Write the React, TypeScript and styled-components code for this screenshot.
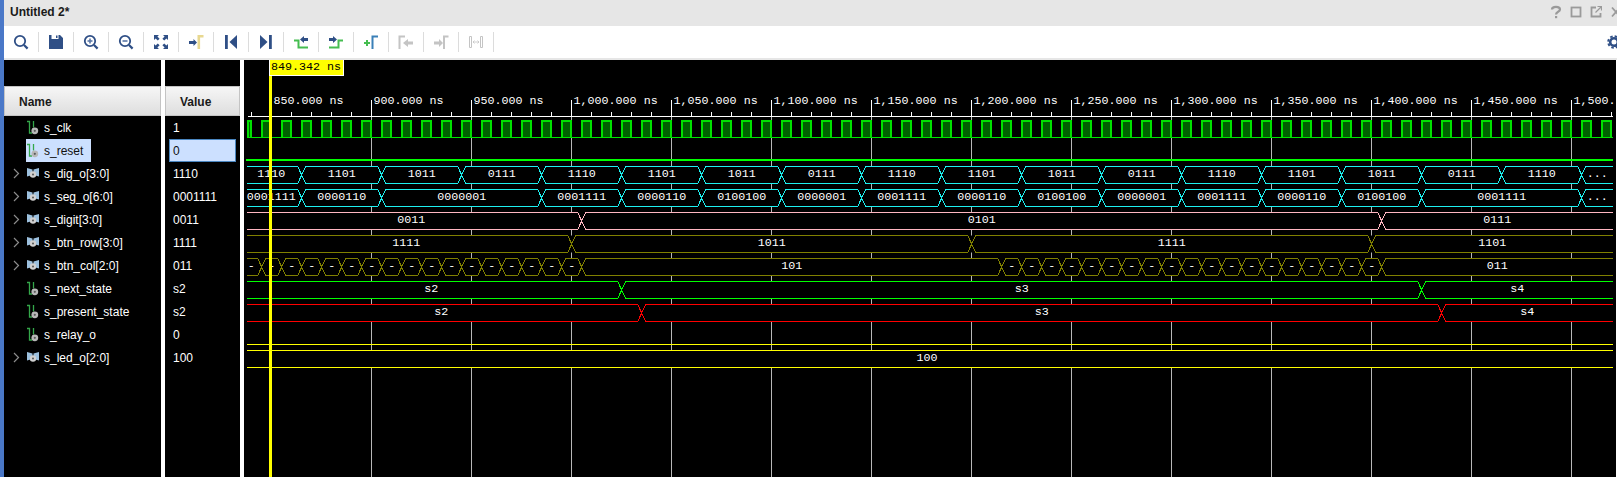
import React from 'react';
import styled, { createGlobalStyle } from 'styled-components';

const GlobalStyle = createGlobalStyle`
  html, body, #root {
    margin: 0;
    height: 100%;
    overflow: hidden;
    background: #fff;
  }
`;

const Window = styled.div`
  display: flex;
  flex-direction: column;
  width: 1617px;
  height: 477px;
  box-sizing: border-box;
  border-left: 4px solid #4a78c8;
  overflow: hidden;
  font-family: 'Liberation Sans', Arial, sans-serif;
  font-size: 12px;
`;

const TitleBar = styled.div`
  display: flex;
  flex: none;
  align-items: center;
  justify-content: space-between;
  height: 26px;
  padding: 0 0 2px 6px;
  box-sizing: border-box;
  background: #e6e6e6;
`;

const Title = styled.span`
  font-weight: bold;
  color: #1a1a1a;
`;

const WindowControls = styled.div`
  display: flex;
  margin-right: -9px;
`;

const ControlSlot = styled.span`
  display: flex;
  justify-content: center;
  width: 20px;
  height: 14px;
`;

const Toolbar = styled.div`
  display: flex;
  flex: none;
  align-items: center;
  height: 32px;
  box-sizing: content-box;
  background: #fff;
  border-bottom: 2px solid #e6e6e6;
`;

const ToolButton = styled.div`
  display: flex;
  flex: none;
  align-items: center;
  justify-content: center;
  width: 35px;
  height: 20px;
  box-sizing: border-box;
  border-right: 1px solid #dcdcdc;
`;

const GearSlot = styled.div`
  display: flex;
  margin-left: auto;
  margin-right: -4px;
`;

const Body = styled.div`
  display: flex;
  flex: 1;
  gap: 4px;
  min-height: 0;
  padding-right: 1px;
`;

const Panel = styled.div<{ $width: number }>`
  flex: none;
  width: ${(p) => p.$width}px;
  padding-top: 26px;
  box-sizing: border-box;
  background: #000;
`;

const HeaderCell = styled.div`
  display: flex;
  align-items: center;
  height: 30px;
  padding: 2px 0 0 14px;
  box-sizing: border-box;
  border: 1px solid #c4c4c4;
  background: linear-gradient(#f6f6f6, #dedede);
  font-weight: bold;
  color: #1a1a1a;
`;

const Row = styled.div`
  display: flex;
  align-items: center;
  height: 23px;
`;

const ExpandSlot = styled.span`
  display: flex;
  flex: none;
  align-items: center;
  justify-content: center;
  width: 22px;
  padding-left: 2px;
  box-sizing: border-box;
`;

const NameCell = styled.div<{ $selected?: boolean }>`
  display: flex;
  align-items: center;
  gap: 5px;
  height: 100%;
  padding: 0 8px 0 1px;
  background: ${(p) => (p.$selected ? '#cce0ff' : 'transparent')};
  color: ${(p) => (p.$selected ? '#111' : '#fff')};
`;

const ValueCell = styled.div<{ $selected?: boolean }>`
  display: flex;
  align-items: center;
  width: 67px;
  height: 23px;
  margin-left: 4px;
  padding-left: 3px;
  box-sizing: border-box;
  border: 1px solid ${(p) => (p.$selected ? '#4a86c0' : 'transparent')};
  background: ${(p) => (p.$selected ? '#cce0ff' : 'transparent')};
  color: ${(p) => (p.$selected ? '#111' : '#fff')};
`;

const WavePanel = styled.div`
  flex: 1;
  min-width: 0;
  background: #000;
`;

const WaveSvg = styled.svg`
  display: block;
  width: 100%;
  height: 100%;
`;

const MonoText = styled.text<{ $dark?: boolean }>`
  font-family: 'Liberation Mono', 'Courier New', monospace;
  font-size: 11.7px;
  fill: ${(p) => (p.$dark ? '#000' : '#fff')};
`;

const BLUE = '#2f4f86';
const GREY = '#c4c4c4';
const STEP_GREEN = '#45bd50';

const Icon: React.FC<{ children: React.ReactNode; size?: number }> = ({ children, size = 16 }) => (
  <svg width={size} height={size} viewBox="0 0 16 16" fill="none">
    {children}
  </svg>
);

const Lens: React.FC<{ mark?: 'plus' | 'minus' }> = ({ mark }) => (
  <>
    <circle cx="7" cy="7" r="5.2" stroke={BLUE} strokeWidth="1.8" />
    <path d="M11 11l3.6 3.6" stroke={BLUE} strokeWidth="2.2" />
    {mark && <path d="M4.5 7h5" stroke="#5a76a6" strokeWidth="1.6" />}
    {mark === 'plus' && <path d="M7 4.5v5" stroke="#5a76a6" strokeWidth="1.6" />}
  </>
);

const tools: React.ReactNode[] = [
  <Lens key="find" />,
  <path key="save" fill={BLUE} fillRule="evenodd" d="M1 1h2.5v4h7V1H12l3 3v11H1zM8 1.5h1.5v2.5H8z" />,
  <Lens key="in" mark="plus" />,
  <Lens key="out" mark="minus" />,
  <path
    key="fit"
    fill={BLUE}
    d="M1 1h5L4.4 2.6 6.6 4.8 4.8 6.6 2.6 4.4 1 6zM15 1v5l-1.6-1.6-2.2 2.2-1.8-1.8 2.2-2.2L10 1zM1 15v-5l1.6 1.6 2.2-2.2 1.8 1.8-2.2 2.2L6 15zM15 15h-5l1.6-1.6-2.2-2.2 1.8-1.8 2.2 2.2L15 10z"
  />,
  <g key="cursor">
    <path d="M1 7h4.5V5L9 8.5 5.5 12v-2H1z" fill={BLUE} />
    <path d="M10.8 15V2.3H15.5" stroke="#e8d890" strokeWidth="2.6" />
  </g>,
  <g key="start">
    <rect x="2" y="1" width="2.8" height="14" fill={BLUE} />
    <path d="M14 1v14L6.5 8z" fill={BLUE} />
  </g>,
  <g key="end">
    <rect x="11" y="1" width="2.8" height="14" fill={BLUE} />
    <path d="M2 1v14l7.5-7z" fill={BLUE} />
  </g>,
  <g key="prev">
    <path d="M1 6.5h4.5v7h9.5" stroke={STEP_GREEN} strokeWidth="2" />
    <path d="M15 4H11V2L7 5.5 11 9V7h4z" fill={BLUE} />
  </g>,
  <g key="next">
    <path d="M1 13.5h9.5v-7H15" stroke={STEP_GREEN} strokeWidth="2" />
    <path d="M1 4h4V2l4 3.5L5 9V7H1z" fill={BLUE} />
  </g>,
  <g key="add">
    <path d="M1 9h6M4 6v6" stroke={STEP_GREEN} strokeWidth="2" />
    <path d="M9.5 15V2.5H15" stroke="#3a80b8" strokeWidth="2" />
  </g>,
  <g key="prevMarker">
    <path d="M1.5 15V2.5H7" stroke={GREY} strokeWidth="2" />
    <path d="M15 7.5h-5V5L5 9l5 4v-2.5h5z" fill={GREY} />
  </g>,
  <g key="nextMarker">
    <path d="M1 7.5h5V5l4 4-4 4v-2.5H1z" fill={GREY} />
    <path d="M11 15V2.5H15.5" stroke={GREY} strokeWidth="2" />
  </g>,
  <g key="swap">
    <path d="M1.5 2.5h2v11h-2zM12.5 2.5h2v11h-2z" stroke={GREY} strokeWidth="1" />
    <path d="M5 8h6M5 8l1.5-1.5M5 8l1.5 1.5M11 8L9.5 6.5M11 8L9.5 9.5" stroke={GREY} strokeWidth="0.8" />
  </g>,
];

const ScalarIcon: React.FC = () => (
  <svg width="12" height="15" viewBox="0 0 12 15" fill="none">
    <path d="M0 1.5h2.5V13H5" stroke="#34a84a" strokeWidth="1.3" />
    <path d="M6.5 1v6.5" stroke="#34a84a" strokeWidth="1.3" />
    <circle cx="7.8" cy="10.8" r="3.4" fill="#b8b8b8" />
    <circle cx="7.8" cy="10.8" r="1.1" fill="#5a5a5a" />
  </svg>
);

const VectorIcon: React.FC = () => (
  <svg width="12" height="15" viewBox="0 0 12 15" fill="none">
    <path d="M0 2l5.5 1.5V9L0 10.5zM12 2L6.5 3.5V9l5.5 1.5z" fill="#9cc0de" />
    <circle cx="6" cy="8.5" r="3.2" fill="#d0d0d0" />
    <circle cx="6" cy="8.5" r="1" fill="#555" />
  </svg>
);

const Chevron: React.FC = () => (
  <svg width="7" height="11" viewBox="0 0 7 11" fill="none">
    <path d="M1 1l4.5 4.5L1 10" stroke="#8c8c8c" strokeWidth="1.2" />
  </svg>
);

type Signal = { name: string; value: string; bus?: boolean; selected?: boolean };

const signals: Signal[] = [
  { name: 's_clk', value: '1' },
  { name: 's_reset', value: '0', selected: true },
  { name: 's_dig_o[3:0]', value: '1110', bus: true },
  { name: 's_seg_o[6:0]', value: '0001111', bus: true },
  { name: 's_digit[3:0]', value: '0011', bus: true },
  { name: 's_btn_row[3:0]', value: '1111', bus: true },
  { name: 's_btn_col[2:0]', value: '011', bus: true },
  { name: 's_next_state', value: 's2' },
  { name: 's_present_state', value: 's2' },
  { name: 's_relay_o', value: '0' },
  { name: 's_led_o[2:0]', value: '100', bus: true },
];

const X_START = 247;
const X_END = 1613;
const LABEL_START = 241;
const GRID_MAJOR = Array.from({ length: 14 }, (_, i) => 271.5 + i * 100);
const GRID_MINOR = Array.from({ length: 69 }, (_, i) => 251.5 + i * 20);
const rulerLabels = [
  '850.000 ns', '900.000 ns', '950.000 ns', '1,000.000 ns', '1,050.000 ns', '1,100.000 ns', '1,150.000 ns',
  '1,200.000 ns', '1,250.000 ns', '1,300.000 ns', '1,350.000 ns', '1,400.000 ns', '1,450.000 ns', '1,500.',
];

const rowTop = (row: number) => 120.5 + row * 23;
const rowBottom = (row: number) => 137.5 + row * 23;

const steps = (from: number, to: number, step: number) => {
  const out: number[] = [];
  for (let x = from; x <= to; x += step) out.push(x);
  return out;
};

type Bus = { row: number; color: string; changes: number[]; labels: string[] };

const digLabels = Array.from({ length: 17 }, (_, i) => ['1110', '1101', '1011', '0111'][i % 4]).concat('...');

const chainA = steps(261.7, 581.7, 20);
const chainB = steps(1001.7, 1381.7, 20);

const buses: Bus[] = [
  { row: 2, color: '#1ef0f0', changes: steps(301.7, 1581.7, 80), labels: digLabels },
  {
    row: 3,
    color: '#1ef0f0',
    changes: [301.7, 381.7, ...steps(541.7, 1421.7, 80), 1581.7],
    labels: [
      '0001111', '0000110', '0000001', '0001111', '0000110', '0100100', '0000001', '0001111', '0000110',
      '0100100', '0000001', '0001111', '0000110', '0100100', '0001111', '...',
    ],
  },
  { row: 4, color: '#ffb6c1', changes: [581.7, 1381.7], labels: ['0011', '0101', '0111'] },
  { row: 5, color: '#808000', changes: [571.7, 971.7, 1371.7], labels: ['1111', '1011', '1111', '1101'] },
  {
    row: 6,
    color: '#808000',
    changes: [...chainA, ...chainB],
    labels: [...chainA.slice(1).map(() => '-'), '-', '101', ...chainB.slice(1).map(() => '-'), '011'],
  },
  { row: 7, color: '#00ff00', changes: [621.7, 1421.7], labels: ['s2', 's3', 's4'] },
  { row: 8, color: '#ff0000', changes: [641.7, 1441.7], labels: ['s2', 's3', 's4'] },
  { row: 10, color: '#ffff00', changes: [], labels: ['100'] },
];

const busLine = (changes: number[], from: number, to: number) => {
  let d = `M${X_START} ${from}`;
  let y = from;
  changes.forEach((c) => {
    const other = y === from ? to : from;
    d += `L${c - 4} ${y}L${c + 4} ${other}`;
    y = other;
  });
  return `${d}L${X_END} ${y}`;
};

const BusWave: React.FC<{ bus: Bus }> = ({ bus }) => {
  const top = rowTop(bus.row);
  const bottom = rowBottom(bus.row);
  const edges = [LABEL_START, ...bus.changes, X_END];
  return (
    <g>
      <rect x={X_START} y={top} width={X_END - X_START} height={bottom - top} fill="#000" />
      <path d={busLine(bus.changes, top, bottom)} stroke={bus.color} shapeRendering="crispEdges" fill="none" />
      <path d={busLine(bus.changes, bottom, top)} stroke={bus.color} shapeRendering="crispEdges" fill="none" />
      {bus.labels.map((label, i) => (
        <MonoText key={i} x={(edges[i] + edges[i + 1]) / 2} y={top + 10} textAnchor="middle">
          {label}
        </MonoText>
      ))}
    </g>
  );
};

const clockEdges = steps(241, 1601, 20);

const Clock: React.FC = () => (
  <g shapeRendering="crispEdges">
    <rect x={X_START} y={120} width={X_END - X_START} height={18} fill="#000" />
    <path d={`M${X_START} 137.5H${X_END}`} stroke="#00e000" />
    {clockEdges.map((x) => {
      const left = Math.max(x, X_START);
      const right = Math.min(x + 11, X_END);
      return (
        <g key={x}>
          <rect x={left} y={120} width={right - left} height={17} fill="#006000" />
          <path d={`M${left + 1} 137V121H${right - 1}V137`} stroke="#00e000" strokeWidth="2" fill="none" />
        </g>
      );
    })}
  </g>
);

const Waveform: React.FC = () => (
  <WaveSvg viewBox="244 60 1372 417" preserveAspectRatio="none">
    <g shapeRendering="crispEdges">
      {GRID_MAJOR.map((x) => (
        <path key={x} d={`M${x} 116V477`} stroke="#b8b8b8" />
      ))}
    </g>
    <Clock />
    <rect x={246} y={159} width={X_END - 246} height={2} fill="#00ff00" />
    <rect x={X_START} y={344} width={X_END - X_START} height={1} fill="#ffff00" />
    {buses.map((bus) => (
      <BusWave key={bus.row} bus={bus} />
    ))}
    <g shapeRendering="crispEdges">
      <path d={`M248 116.5H${X_END}`} stroke="#fff" />
      {GRID_MINOR.map((x) => (
        <path key={x} d={`M${x} 112V116`} stroke="#fff" />
      ))}
      {GRID_MAJOR.map((x) => (
        <path key={x} d={`M${x} 100V116`} stroke="#fff" />
      ))}
    </g>
    {GRID_MAJOR.map((x, i) => (
      <MonoText key={x} x={x + 2} y={103.5}>
        {rulerLabels[i]}
      </MonoText>
    ))}
    <rect x={269} y={76} width={3} height={401} fill="#ffff00" />
    <rect x={269.5} y={59.5} width={74} height={16} fill="#ffff00" stroke="#fff" shapeRendering="crispEdges" />
    <MonoText $dark x={271} y={70}>
      849.342 ns
    </MonoText>
  </WaveSvg>
);

const App: React.FC = () => (
  <>
    <GlobalStyle />
    <Window>
      <TitleBar>
        <Title>Untitled 2*</Title>
        <WindowControls>
          <ControlSlot>
            <svg width="12" height="14" viewBox="0 0 12 14" fill="none">
              <path d="M2 4.5C2 1 10 1 10 4.5 10 7 6 6.5 6 9.5" stroke="#9a9a9a" strokeWidth="2.2" />
              <rect x="5" y="11" width="2.2" height="2.2" fill="#9a9a9a" />
            </svg>
          </ControlSlot>
          <ControlSlot>
            <svg width="12" height="14" viewBox="0 0 12 14" fill="none">
              <rect x="1.5" y="2.5" width="9" height="9" stroke="#9a9a9a" strokeWidth="1.8" />
            </svg>
          </ControlSlot>
          <ControlSlot>
            <svg width="12" height="14" viewBox="0 0 12 14" fill="none">
              <path d="M6 2.5H1.5v9h9V8" stroke="#9a9a9a" strokeWidth="1.8" />
              <path d="M5.5 7.5L11 2M7.5 1.5h4v4" stroke="#9a9a9a" strokeWidth="1.2" />
            </svg>
          </ControlSlot>
          <ControlSlot>
            <svg width="12" height="14" viewBox="0 0 12 14" fill="none">
              <path d="M2 2.5l8 9M10 2.5l-8 9" stroke="#9a9a9a" strokeWidth="1.8" />
            </svg>
          </ControlSlot>
        </WindowControls>
      </TitleBar>
      <Toolbar>
        {tools.map((tool, i) => (
          <ToolButton key={i}>
            <Icon>{tool}</Icon>
          </ToolButton>
        ))}
        <GearSlot>
          <svg width="14" height="14" viewBox="0 0 14 14" fill="none">
            <circle cx="7" cy="7" r="3.8" stroke={BLUE} strokeWidth="2.6" />
            <circle cx="7" cy="7" r="5.8" stroke={BLUE} strokeWidth="2" strokeDasharray="2.5 2.05" />
          </svg>
        </GearSlot>
      </Toolbar>
      <Body>
        <Panel $width={157}>
          <HeaderCell>Name</HeaderCell>
          {signals.map((s) => (
            <Row key={s.name}>
              <ExpandSlot>{s.bus && <Chevron />}</ExpandSlot>
              <NameCell $selected={s.selected}>
                {s.bus ? <VectorIcon /> : <ScalarIcon />}
                {s.name}
              </NameCell>
            </Row>
          ))}
        </Panel>
        <Panel $width={75}>
          <HeaderCell>Value</HeaderCell>
          {signals.map((s) => (
            <Row key={s.name}>
              <ValueCell $selected={s.selected}>{s.value}</ValueCell>
            </Row>
          ))}
        </Panel>
        <WavePanel>
          <Waveform />
        </WavePanel>
      </Body>
    </Window>
  </>
);

export default App;
